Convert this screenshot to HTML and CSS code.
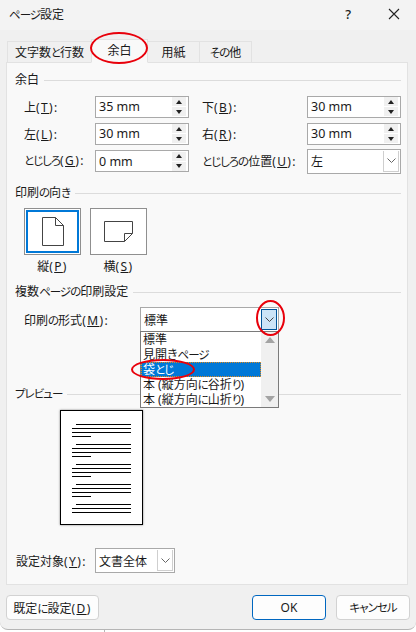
FILE: index.html
```html
<!DOCTYPE html>
<html lang="ja">
<head>
  <meta charset="UTF-8">
  <title>ページ設定</title>
  <link rel="stylesheet" href="styles.css">
</head>
<body>
  <div class="window">
    <div class="titlebar">
      <span class="title"><span class="kana">ページ</span>設定</span>
      <span class="help">?</span>
      <svg class="close" width="12" height="12" viewBox="0 0 12 12"><path d="M1 1L11 11M11 1L1 11" stroke="#222" stroke-width="1.1" fill="none"/></svg>
    </div>

    <div class="tabs">
      <div class="tab tab-first"><span>文字数<span class="kana">と</span>行数</span></div>
      <div class="tab tab-active">余白</div>
      <div class="tab tab-paper">用紙</div>
      <div class="tab tab-other"><span><span class="kana">その</span>他</span></div>
    </div>

    <div class="panel">
      <div class="group-title">余白<span class="rule"></span></div>
      <div class="margin-grid">
        <label class="field-label">上<span class="key">(<u>T</u>):</span></label>
        <div class="spin"><span>35 mm</span><div class="spin-btns"><i class="up"></i><i class="down"></i></div></div>
        <label class="field-label">下<span class="key">(<u>B</u>):</span></label>
        <div class="spin"><span>30 mm</span><div class="spin-btns"><i class="up"></i><i class="down"></i></div></div>

        <label class="field-label">左<span class="key">(<u>L</u>):</span></label>
        <div class="spin"><span>30 mm</span><div class="spin-btns"><i class="up"></i><i class="down"></i></div></div>
        <label class="field-label">右<span class="key">(<u>R</u>):</span></label>
        <div class="spin"><span>30 mm</span><div class="spin-btns"><i class="up"></i><i class="down"></i></div></div>

        <label class="field-label"><span class="kana">とじしろ</span><span class="key">(<u>G</u>):</span></label>
        <div class="spin spin-last"><span>0 mm</span><div class="spin-btns"><i class="up"></i><i class="down"></i></div></div>
        <label class="field-label"><span class="kana">とじしろの</span>位置<span class="key">(<u>U</u>):</span></label>
        <div class="combo combo-gutter"><span>左</span><div class="combo-btn"><svg width="9" height="5" viewBox="0 0 9 5"><path d="M0.5 0.5L4.5 4.5L8.5 0.5" stroke="#666" fill="none"/></svg></div></div>
      </div>

      <div class="group-title group-orient"><span>印刷<span class="kana">の</span>向<span class="kana">き</span></span><span class="rule"></span></div>
      <div class="orient-row">
        <div class="orient">
          <div class="orient-btn selected">
            <svg width="22" height="29" viewBox="0 0 22 29"><path d="M0.5 0.5H13.5L21.5 8.5V28.5H0.5Z M13.5 0.5V8.5H21.5" fill="#fff" stroke="#444"/></svg>
          </div>
          <div class="orient-label">縦<span class="key">(<u>P</u>)</span></div>
        </div>
        <div class="orient">
          <div class="orient-btn">
            <svg width="29" height="21" viewBox="0 0 29 21"><path d="M0.5 0.5H28.5V12.5L20.5 20.5H0.5Z M28.5 12.5H20.5V20.5" fill="#fff" stroke="#444"/></svg>
          </div>
          <div class="orient-label">横<span class="key">(<u>S</u>)</span></div>
        </div>
      </div>

      <div class="group-title group-multi"><span>複数<span class="kana">ページの</span>印刷設定</span><span class="rule"></span></div>
      <div class="multi-row">
        <label class="field-label multi-label">印刷<span class="kana">の</span>形式<span class="key">(<u>M</u>):</span></label>
        <div class="combo combo-format">
          <span>標準</span>
          <div class="combo-btn hot"><svg width="9" height="5" viewBox="0 0 9 5"><path d="M0.5 0.5L4.5 4.5L8.5 0.5" stroke="#444" fill="none"/></svg></div>
        </div>
      </div>

      <div class="group-title group-preview"><span class="kana">プレビュー</span><span class="rule rule-preview"></span></div>
      <div class="preview-page">
        <svg width="81" height="113" viewBox="0 0 81 113" stroke="#000" stroke-width="1">
          <path d="M15 13.5H70M11 17.5H70M11 21.5H70M11 25.5H30"/>
          <path d="M15 33.5H70M11 37.5H70M11 41.5H70M11 45.5H30"/>
          <path d="M15 53.5H70M11 57.5H70M11 61.5H70M11 65.5H30"/>
          <path d="M15 73.5H70M11 77.5H70M11 81.5H70M11 85.5H30"/>
          <path d="M15 93.5H70M11 97.5H70M11 101.5H70"/>
        </svg>
      </div>

      <div class="apply-row">
        <label class="field-label">設定対象<span class="key">(<u>Y</u>):</span></label>
        <div class="combo combo-apply"><span>文書全体</span><div class="combo-btn"><svg width="9" height="5" viewBox="0 0 9 5"><path d="M0.5 0.5L4.5 4.5L8.5 0.5" stroke="#666" fill="none"/></svg></div></div>
      </div>
    </div>

    <div class="footer">
      <button class="btn btn-default-set">既定<span class="kana">に</span>設定<span class="key">(<u>D</u>)</span></button>
      <button class="btn btn-ok">OK</button>
      <button class="btn btn-cancel"><span class="kana">キャンセル</span></button>
    </div>
  </div>

  <!-- open list of the format combo -->
  <div class="droplist">
    <div class="droplist-items">
      <div class="item">標準</div>
      <div class="item">見開き<span class="kana">ページ</span></div>
      <div class="item item-selected">袋<span class="kana">とじ</span></div>
      <div class="item">本 (縦方向<span class="kana">に</span>谷折<span class="kana">り</span>)</div>
      <div class="item">本 (縦方向<span class="kana">に</span>山折<span class="kana">り</span>)</div>
    </div>
    <div class="droplist-scroll">
      <i class="arrow-up"></i>
      <i class="arrow-down"></i>
    </div>
  </div>

  <!-- red marks drawn over the dialog -->
  <div class="mark mark-tab"></div>
  <div class="mark mark-btn"></div>
  <div class="mark mark-item"></div>

  <div class="page-edge"></div>
</body>
</html>
```

FILE: styles.css
```css
* {
  box-sizing: border-box;
}

html, body {
  margin: 0;
  padding: 0;
  width: 416px;
  height: 632px;
  overflow: hidden;
  background: #fff;
}

body {
  position: relative;
  font-family: "Noto Sans", "Noto Sans CJK JP", sans-serif;
  font-size: 12px;
  font-feature-settings: "palt";
  color: #1a1a1a;
}

u {
  text-underline-offset: 1px;
}

.key {
  letter-spacing: 1.4px;
}

/* kana run tight in the dialog font */
.kana {
  font-size: 11.5px;
  letter-spacing: -1px;
}

.window {
  width: 416px;
  height: 630px;
  background: #f0f0f0;
  border-bottom: 1px solid #b5b5b5;
  border-bottom-left-radius: 8px;
  border-bottom-right-radius: 8px;
  overflow: hidden;
}

.titlebar {
  display: flex;
  align-items: center;
  height: 30px;
  background: #f3f3f3;
  padding: 0 10px 3px 9px;
}

.title {
  flex: 1;
}

.help {
  font-size: 13px;
  margin-right: 37px;
  font-weight: 500;
}

.close {
  margin-right: 6px;
}

/* tabs */
.tabs {
  display: flex;
  height: 21px;
  margin: 11px 0 0 7px;
}

.tab {
  display: flex;
  align-items: center;
  justify-content: center;
  background: #f0f0f0;
  border: 1px solid #e2e2e2;
  border-bottom: none;
  margin-right: -1px;
}

.tab-first { width: 85px; }
.tab-active { width: 57px; background: #f9f9f9; margin-top: -2px; height: 24px; padding-bottom: 2px; border-bottom: 1px solid #f9f9f9; position: relative; }
.tab-paper { width: 53px; }
.tab-other { width: 53px; }

/* main panel */
.panel {
  width: 402px;
  height: 523px;
  margin-left: 6px;
  padding: 0 8px;
  background: #f9f9f9;
  border: 1px solid #e2e2e2;
}

.group-title {
  display: flex;
  align-items: center;
  height: 18px;
  line-height: 18px;
  gap: 5px;
}

.group-title:first-child {
  margin-top: 8px;
}

.rule {
  flex: 1;
  height: 1px;
  background: #dcdcdc;
  margin-right: -2px;
}

.margin-grid {
  display: grid;
  grid-template-columns: 71px 94px 118px 94px;
  grid-template-rows: 21px 21px 21px;
  row-gap: 6px;
  align-items: center;
  margin: 7px 0 0 9px;
  column-gap: 0;
}

.margin-grid .field-label:nth-of-type(even) {
  padding-left: 13px;
}

.field-label {
  white-space: nowrap;
}

.spin {
  display: flex;
  height: 22px;
  align-items: center;
  justify-content: space-between;
  background: #fff;
  border: 1px solid #a9a9a9;
  padding: 0 1px 0 3px;
  font-size: 12.5px;
}

.spin-last {
  margin-top: 1px;
}

.spin-btns {
  display: flex;
  flex-direction: column;
  gap: 1px;
  width: 14px;
  margin-right: 1px;
}

.spin-btns i {
  display: flex;
  align-items: center;
  justify-content: center;
  height: 9px;
  background: #f0f0f0;
}

.spin-btns i::after {
  content: "";
  border-left: 3px solid transparent;
  border-right: 3px solid transparent;
}

.spin-btns .up::after { border-bottom: 4px solid #222; }
.spin-btns .down::after { border-top: 4px solid #222; }

.combo {
  display: flex;
  align-items: center;
  justify-content: space-between;
  background: #fff;
  border: 1px solid #a9a9a9;
  padding: 1px 1px 1px 3px;
}

.combo-gutter {
  height: 25px;
  margin-top: 1px;
}

.combo-btn {
  display: flex;
  align-items: center;
  justify-content: center;
  width: 16px;
  height: 100%;
  background: #fff;
  border-left: 1px solid #cfcfcf;
  border-bottom: 1px solid #cfcfcf;
  border-right: 1px solid #cfcfcf;
}

.combo-btn.hot {
  background: #cce4f7;
  border: 1px solid #005499;
}

/* orientation */
.group-orient {
  margin-top: 13px;
}

.orient-row {
  display: flex;
  gap: 9px;
  margin: 6px 0 0 9px;
}

.orient {
  width: 57px;
}

.orient-btn {
  display: flex;
  align-items: center;
  justify-content: center;
  height: 47px;
  background: #fff;
  border: 1px solid #8f8f8f;
}

.orient-btn.selected {
  box-shadow: inset 0 0 0 1px #fff, inset 0 0 0 3px #0078d7;
  background: #fff;
}

.orient-label {
  text-align: center;
  margin-top: 3px;
  line-height: 18px;
}

/* multiple pages */
.group-multi {
  margin-top: 7px;
}

.multi-row {
  display: flex;
  align-items: center;
  margin: 6px 0 0 9px;
}

.multi-label {
  width: 116px;
}

.combo-format {
  width: 139px;
  height: 25px;
}

.combo-format .combo-btn {
  height: 21px;
}

.group-preview {
  margin-top: 53px;
}

.preview-page {
  width: 83px;
  height: 115px;
  margin: 7px 0 0 45px;
  background: #fff;
  border: 1px solid #000;
  box-shadow: 0 0 2px rgba(0, 0, 0, 0.5);
}

.preview-page svg {
  display: block;
}

.apply-row {
  display: flex;
  align-items: center;
  margin: 23px 0 0 1px;
  gap: 10px;
}

.apply-row .field-label {
  width: 70px;
}

.combo-apply {
  width: 80px;
  height: 25px;
  margin-left: -1px;
}

/* bottom buttons */
.footer {
  display: flex;
  padding: 10px 6px 0;
}

.btn {
  height: 25px;
  background: #fdfdfd;
  border: 1px solid #d2d2d2;
  border-radius: 4px;
  font: inherit;
  font-feature-settings: "palt";
  color: inherit;
  padding: 0;
}

.btn-default-set { width: 93px; margin-right: auto; }
.btn-ok { width: 74px; border-color: #0067c0; margin-right: 10px; }
.btn-cancel { width: 74px; }

/* drop-down list, hangs over the dialog */
.droplist {
  position: absolute;
  left: 140px;
  top: 331px;
  width: 139px;
  height: 77px;
  display: flex;
  background: #fff;
  border: 1px solid #7a7a7a;
  line-height: 15px;
}

.droplist-items {
  flex: 1;
  min-width: 0;
}

.item {
  height: 15px;
  padding-left: 2px;
  white-space: nowrap;
  overflow: hidden;
}

.item-selected {
  background: #0078d7;
  color: #fff;
  outline: 1px dotted #e08a1e;
  outline-offset: -1px;
}

.droplist-scroll {
  display: flex;
  flex-direction: column;
  justify-content: space-between;
  align-items: center;
  width: 17px;
  background: #f0f0f0;
  padding: 5px 0;
}

.arrow-up {
  border-left: 5px solid transparent;
  border-right: 5px solid transparent;
  border-bottom: 6px solid #a3a3a3;
}

.arrow-down {
  border-left: 5px solid transparent;
  border-right: 5px solid transparent;
  border-top: 6px solid #a3a3a3;
}

.mark {
  position: absolute;
  border: 2px solid #e8000b;
  border-radius: 50%;
}

.mark-tab { left: 90px; top: 32px; width: 58px; height: 32px; }
.mark-btn { left: 256px; top: 300px; width: 29px; height: 36px; }
.mark-item { left: 131px; top: 359px; width: 64px; height: 21px; }

.page-edge {
  position: absolute;
  left: 104px;
  top: 630px;
  width: 1px;
  height: 2px;
  background: #b5b5b5;
}
```
